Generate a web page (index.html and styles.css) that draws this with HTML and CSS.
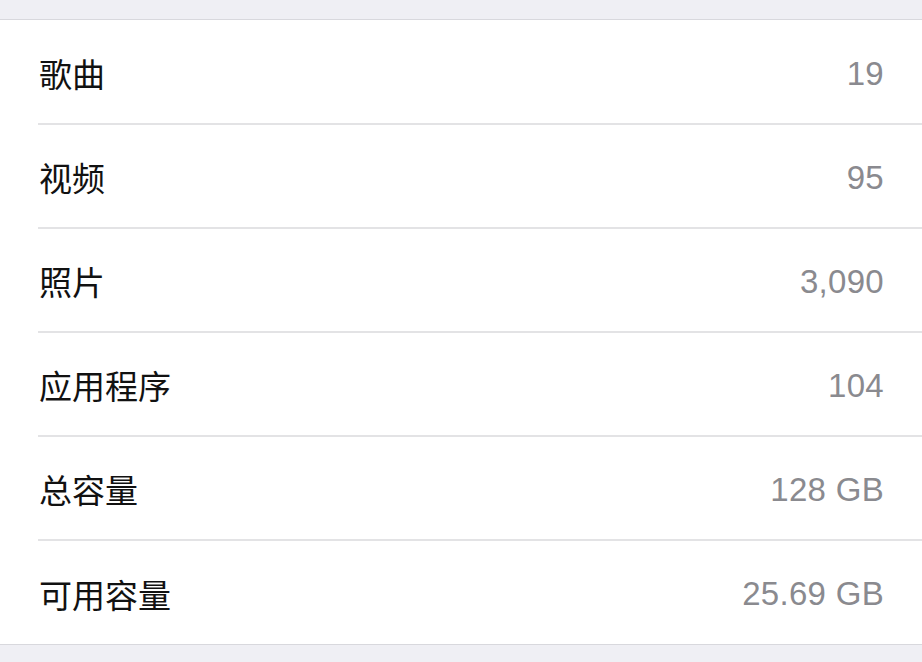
FILE: index.html
```html
<!DOCTYPE html>
<html lang="zh">
<head>
<meta charset="utf-8">
<link rel="stylesheet" href="styles.css">
</head>
<body>
<div class="top"></div>
<ul class="list">
  <li class="row"><div class="inner"><span class="label">歌曲</span><span class="value">19</span></div></li>
  <li class="row"><div class="inner"><span class="label">视频</span><span class="value">95</span></div></li>
  <li class="row"><div class="inner"><span class="label">照片</span><span class="value">3,090</span></div></li>
  <li class="row"><div class="inner"><span class="label">应用程序</span><span class="value">104</span></div></li>
  <li class="row"><div class="inner"><span class="label">总容量</span><span class="value">128 GB</span></div></li>
  <li class="row"><div class="inner"><span class="label">可用容量</span><span class="value">25.69 GB</span></div></li>
</ul>
</body>
</html>
```
FILE: styles.css
```css
html, body {
  margin: 0;
  padding: 0;
  background: #efeff4;
  font-family: "Liberation Sans", "Noto Sans CJK SC", sans-serif;
}
.top {
  height: 19px;
}
.list {
  list-style: none;
  margin: 0;
  padding: 1px 0 0;
  background: #ffffff;
  border-top: 1px solid #d8d8dd;
  border-bottom: 1px solid #d8d8dd;
}
.row {
  padding-left: 38px;
}
.inner {
  height: 102px;
  display: flex;
  align-items: center;
  justify-content: space-between;
  padding-right: 38px;
  border-bottom: 2px solid #e3e3e5;
}
.row:last-child .inner {
  border-bottom: none;
  height: 103px;
}
.label {
  font-family: "Noto Sans CJK SC", sans-serif;
  font-size: 33px;
  color: #111111;
  padding-left: 1px;
  margin-top: 2px;
}
.value {
  font-size: 33px;
  letter-spacing: 0.3px;
  color: #8a8a8f;
  margin-top: 3px;
}
```
